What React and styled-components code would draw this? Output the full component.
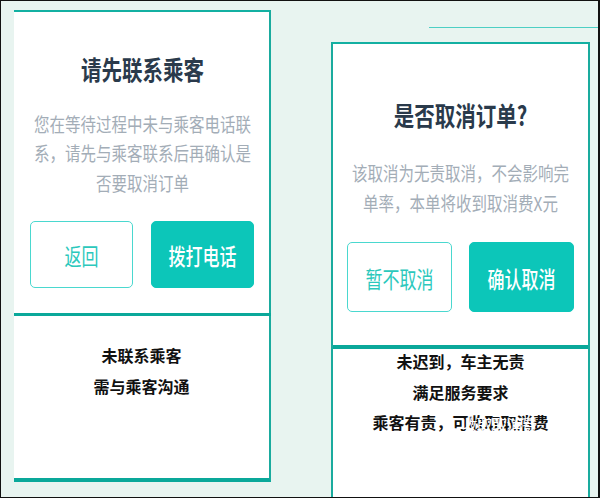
import React from "react";
import styled, { createGlobalStyle } from "styled-components";

const Global = createGlobalStyle`
  html, body { margin: 0; padding: 0; background: #e8f4f0; }
  body { font-family: "Noto Sans CJK SC", "Noto Sans", sans-serif; }
`;

const Frame = styled.div`
  box-sizing: border-box;
  width: 600px;
  height: 498px;
  border: 1px solid #111;
  border-right-width: 2px;
  background: #e8f4f0;
  display: flex;
  align-items: flex-start;
  overflow: hidden;
`;

const LeftCard = styled.div`
  box-sizing: border-box;
  margin: 9px 0 0 13px;
  width: 257px;
  height: 472px;
  background: #fff;
  border-top: 2px solid #13b0a2;
  border-right: 2px solid #1aab9e;
  border-bottom: 4px solid #0aa89a;
  display: flex;
  flex-direction: column;
`;

const RightColumn = styled.div`
  margin-left: 60px;
  display: flex;
  flex-direction: column;
  flex: 1;
`;

const Rule = styled.div`
  margin: 26px 0 0 98px;
  height: 1px;
  background: #4dcfc4;
`;

const RightCard = styled.div`
  box-sizing: border-box;
  margin-top: 14px;
  width: 259px;
  height: 470px;
  background: #fff;
  border-top: 2px solid #13b0a2;
  border-left: 2px solid #1aab9e;
  border-right: 2px solid #1aab9e;
  display: flex;
  flex-direction: column;
`;

const Dialog = styled.div`
  box-sizing: border-box;
  padding: ${(p) => p.$top}px 0 ${(p) => p.$bottom}px;
  border-bottom: ${(p) => p.$rule}px solid #0aa89a;
  margin-right: ${(p) => p.$overhang}px;
  display: flex;
  flex-direction: column;
  align-items: center;
`;

const Title = styled.div`
  font-size: 20.5px;
  font-weight: 600;
  color: #2a3a4b;
  line-height: 30px;
  transform: scaleY(1.3);
  white-space: nowrap;
`;

/* the copy is drawn taller than wide, so its line box is set at the unscaled pitch */
const Body = styled.div`
  margin-top: ${(p) => p.$gap}px;
  width: ${(p) => p.$width}px;
  font-size: 15.5px;
  color: #a3adb7;
  line-height: ${(p) => p.$lh}px;
  text-align: center;
  transform: scaleY(1.22);
`;

const Actions = styled.div`
  align-self: stretch;
  margin-top: ${(p) => p.$gap}px;
  padding: 0 ${(p) => p.$right}px 0 ${(p) => p.$left}px;
  display: grid;
  grid-template-columns: 1fr 1fr;
  column-gap: ${(p) => p.$between}px;
`;

const Button = styled.div`
  box-sizing: border-box;
  height: ${(p) => p.$h}px;
  border-radius: 5px;
  display: flex;
  align-items: center;
  justify-content: center;
  background: ${(p) => (p.$primary ? "#0cc6b9" : "#fff")};
  border: 1.5px solid ${(p) => (p.$primary ? "#0cc6b9" : "#4ad8cf")};
  color: ${(p) => (p.$primary ? "#fff" : "#2cc8bc")};
  font-size: 17px;
  font-weight: ${(p) => (p.$primary ? 500 : 400)};
`;

const Label = styled.span`
  display: inline-block;
  transform: scaleY(1.35);
`;

const Notes = styled.div`
  margin-top: ${(p) => p.$top}px;
  display: flex;
  flex-direction: column;
  align-items: center;
  font-size: 16px;
  font-weight: 700;
  color: #111;
  line-height: ${(p) => p.$lh}px;
`;

const Overlap = styled.span`
  position: relative;
`;

const Ghost = styled.span`
  position: absolute;
  left: 9px;
  top: -1px;
  color: #fff;
  font-weight: 400;
  letter-spacing: -1px;
  white-space: nowrap;
`;

export default function App() {
  return (
    <>
      <Global />
      <Frame>
        <LeftCard>
          <Dialog $top={41} $bottom={25} $rule={3} $overhang={-2}>
            <Title>请先联系乘客</Title>
            <Body $gap={35} $width={220} $lh={23.8}>
              您在等待过程中未与乘客电话联系，请先与乘客联系后再确认是否要取消订单
            </Body>
            <Actions $gap={32} $left={16} $right={17} $between={18}>
              <Button $h={67}><Label>返回</Label></Button>
              <Button $h={67} $primary><Label>拨打电话</Label></Button>
            </Actions>
          </Dialog>
          <Notes $top={24} $lh={31}>
            <div>未联系乘客</div>
            <div>需与乘客沟通</div>
          </Notes>
        </LeftCard>
        <RightColumn>
          <Rule />
          <RightCard>
            <Dialog $top={55} $bottom={33} $rule={4} $overhang={0}>
              <Title>是否取消订单?</Title>
              <Body $gap={34} $width={224} $lh={24.6}>
                该取消为无责取消，不会影响完单率，本单将收到取消费X元
              </Body>
              <Actions $gap={30} $left={14} $right={14} $between={17}>
                <Button $h={70}><Label>暂不取消</Label></Button>
                <Button $h={70} $primary><Label>确认取消</Label></Button>
              </Actions>
            </Dialog>
            <Notes $top={-3} $lh={30.5}>
              <div>未迟到，车主无责</div>
              <div>满足服务要求</div>
              <div>
                乘客有责，
                <Overlap>
                  可收取取消费
                  <Ghost>收取取消费</Ghost>
                </Overlap>
              </div>
            </Notes>
          </RightCard>
        </RightColumn>
      </Frame>
    </>
  );
}
